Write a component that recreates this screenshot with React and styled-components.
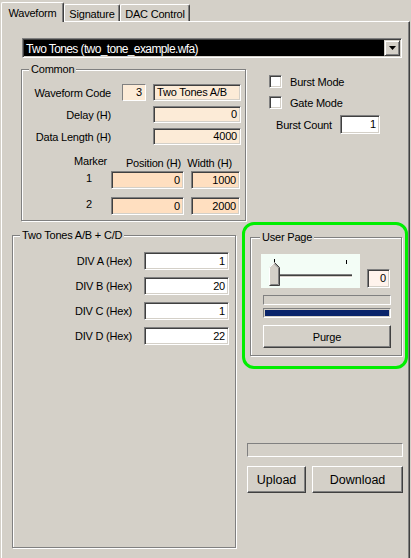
import React from "react";
import styled, { createGlobalStyle } from "styled-components";

const GlobalStyle = createGlobalStyle`
  html, body {
    margin: 0;
    background: #d4d0c8;
  }
  * {
    box-sizing: border-box;
  }
`;

const Window = styled.div`
  width: 411px;
  height: 558px;
  overflow: hidden;
  background: #d4d0c8;
  padding-top: 2px;
  font-family: "Liberation Sans", Arial, sans-serif;
  font-size: 11px;
  letter-spacing: -0.2px;
  color: #000;
`;

const TabRow = styled.div`
  display: flex;
  align-items: flex-end;
  height: 19px;
  padding-left: 1px;
  position: relative;
  z-index: 1;
`;

const Tab = styled.div`
  width: ${(p) => p.$width}px;
  height: ${(p) => (p.$active ? 20 : 17)}px;
  margin-bottom: ${(p) => (p.$active ? -1 : 0)}px;
  padding-top: ${(p) => (p.$active ? 3 : 2)}px;
  line-height: 14px;
  text-align: center;
  background: #d4d0c8;
  border-top: 1px solid #fff;
  border-left: 1px solid #fff;
  border-right: 1px solid #404040;
  border-top-left-radius: 2px;
  border-top-right-radius: 2px;
  box-shadow: inset -1px 0 0 #808080;
`;

const Panel = styled.div`
  margin-left: 1px;
  width: 409px;
  height: 545px;
  border-top: 1px solid #fff;
  border-left: 1px solid #fff;
  border-right: 1px solid #404040;
  box-shadow: inset -1px 0 0 #808080;
`;

const Dropdown = styled.div`
  display: flex;
  align-items: center;
  margin: 16px 0 0 20px;
  width: 380px;
  height: 20px;
  padding-left: 3px;
  background: #000;
  color: #fff;
  font-size: 12px;
  letter-spacing: -0.6px;
  border: 1px solid;
  border-color: #808080 #fff #fff #808080;
  box-shadow: inset 1px 1px 0 #404040, inset -1px -1px 0 #d4d0c8;
`;

const DropText = styled.span`
  flex: 1;
  padding-top: 1px;
`;

const DropButton = styled.div`
  display: flex;
  align-items: center;
  justify-content: center;
  width: 16px;
  height: 16px;
  margin-right: 1px;
  background: #d4d0c8;
  border: 1px solid;
  border-color: #d4d0c8 #404040 #404040 #d4d0c8;
  box-shadow: inset 1px 1px 0 #fff, inset -1px -1px 0 #808080;
`;

const Row = styled.div`
  display: flex;
  align-items: flex-start;
  margin-top: ${(p) => p.$top || 0}px;
`;

const GroupBox = styled.fieldset`
  margin: ${(p) => p.$margin || "0"};
  padding: ${(p) => p.$padding || "0"};
  min-width: 0;
  width: ${(p) => p.$width}px;
  height: ${(p) => (p.$height ? `${p.$height}px` : "auto")};
  border: 1px solid #808080;
  box-shadow: inset 1px 1px 0 #fff, 1px 1px 0 #fff;
`;

const Legend = styled.legend`
  margin-left: ${(p) => p.$indent || 7}px;
  padding: 0 2px;
  line-height: 13px;
  background: #d4d0c8;
`;

const FormGrid = styled.div`
  display: grid;
  grid-template-columns: ${(p) => p.$columns};
  grid-auto-rows: ${(p) => p.$rowHeight}px;
  column-gap: ${(p) => p.$colGap}px;
  row-gap: ${(p) => p.$rowGap}px;
`;

const Label = styled.div`
  align-self: center;
  text-align: right;
  padding-right: ${(p) => p.$pad || 0}px;
  white-space: nowrap;
`;

const Field = styled.div`
  grid-column: ${(p) => p.$col || "auto"};
  height: ${(p) => p.$height || 17}px;
  padding: 0 3px;
  line-height: ${(p) => (p.$height || 17) - 2}px;
  text-align: ${(p) => (p.$left ? "left" : "right")};
  white-space: nowrap;
  overflow: hidden;
  background: ${(p) => p.$bg || "#fff"};
  border: 1px solid;
  border-color: #808080 #fff #fff #808080;
  box-shadow: inset 1px 1px 0 #404040, inset -1px -1px 0 #d4d0c8;
`;

const StaticField = styled.div`
  padding: 0 3px;
  line-height: 15px;
  text-align: right;
  background: #fcebd7;
  border: 1px solid;
  border-color: #808080 #fff #fff #808080;
`;

const MarkerGrid = styled.div`
  display: grid;
  grid-template-columns: 82px 73px 49px;
  grid-template-rows: 14px 24px 18px;
  column-gap: 7px;
  row-gap: 2px;
  margin-top: 10px;
`;

const MarkerLabel = styled.div`
  align-self: start;
  padding-left: 52px;
  padding-top: ${(p) => p.$top || 0}px;
  text-align: center;
  white-space: nowrap;
`;

const MarkerHead = styled.div`
  align-self: end;
  justify-self: end;
  margin-right: ${(p) => p.$right}px;
  white-space: nowrap;
`;

const MarkerField = styled(Field)`
  align-self: start;
`;

const Options = styled.div`
  display: flex;
  flex-direction: column;
  margin: 12px 0 0 23px;
`;

const CheckRow = styled.label`
  display: flex;
  align-items: center;
  gap: 8px;
  height: 13px;
  margin-bottom: 8px;
`;

const CheckBox = styled.span`
  width: 13px;
  height: 13px;
  background: #fff;
  border: 1px solid;
  border-color: #808080 #fff #fff #808080;
  box-shadow: inset 1px 1px 0 #404040, inset -1px -1px 0 #d4d0c8;
`;

const CountRow = styled.div`
  display: flex;
  align-items: center;
  margin: -2px 0 0 7px;
`;

const CountLabel = styled.span`
  width: 64px;
  white-space: nowrap;
`;

const RightColumn = styled.div`
  display: flex;
  flex-direction: column;
  margin-left: 6px;
`;

const Highlight = styled.div`
  width: 166px;
  height: 147px;
  padding: 6px 0 0 5px;
  border: 3px solid #00ee00;
  border-radius: 12px;
`;

const SliderRow = styled.div`
  display: flex;
  align-items: flex-end;
  gap: 7px;
  margin-left: 10px;
`;

const SliderArea = styled.div`
  width: 99px;
  height: 34px;
  background: #f3fdf6;
`;

const Bar = styled.div`
  width: ${(p) => p.$width}px;
  height: ${(p) => p.$height}px;
  margin: ${(p) => p.$margin};
  padding: 1px;
  background: #d4d0c8;
  border: 1px solid;
  border-color: #808080 #fff #fff #808080;
`;

const BarFill = styled.div`
  height: 100%;
  background: #0a246a;
`;

const Button = styled.div`
  display: flex;
  align-items: center;
  justify-content: center;
  width: ${(p) => p.$width}px;
  height: ${(p) => p.$height}px;
  font-size: ${(p) => p.$size || 11}px;
  letter-spacing: ${(p) => (p.$size ? 0 : -0.2)}px;
  background: #d4d0c8;
  border: 1px solid;
  border-color: #fff #404040 #404040 #fff;
  box-shadow: inset -1px -1px 0 #808080;
`;

const ButtonRow = styled.div`
  display: flex;
  gap: 6px;
  margin: 9px 0 0 5px;
`;

function Slider() {
  return (
    <SliderArea>
      <svg width="99" height="34" viewBox="0 0 99 34">
        <line x1="13.5" y1="5" x2="13.5" y2="10" stroke="#000" />
        <line x1="85.5" y1="6" x2="85.5" y2="10" stroke="#000" />
        <rect x="8" y="20" width="83" height="1" fill="#808080" />
        <rect x="8" y="21" width="83" height="1" fill="#404040" />
        <rect x="8" y="22" width="83" height="1" fill="#d4d0c8" />
        <rect x="8" y="23" width="83" height="1" fill="#fff" />
        <polygon points="8,13.5 13.5,8 19,13.5 19,32 8,32" fill="#d4d0c8" />
        <polyline points="8.5,31.5 8.5,13.5 13.5,8.5" fill="none" stroke="#fff" />
        <polyline points="13.5,8.5 18.5,13.5 18.5,31.5 8.5,31.5" fill="none" stroke="#404040" />
        <polyline points="13.5,9.9 17.5,13.9 17.5,30.5 9.5,30.5" fill="none" stroke="#808080" />
      </svg>
    </SliderArea>
  );
}

const peach = "#fcebd7";
const orange = "#ffdfc0";

export default function App() {
  return (
    <Window>
      <GlobalStyle />
      <TabRow>
        <Tab $active $width={63}>Waveform</Tab>
        <Tab $width={56}>Signature</Tab>
        <Tab $width={70}>DAC Control</Tab>
      </TabRow>
      <Panel>
        <Dropdown>
          <DropText>Two Tones (two_tone_example.wfa)</DropText>
          <DropButton>
            <svg width="7" height="4" viewBox="0 0 7 4">
              <polygon points="0,0 7,0 3.5,4" fill="#000" />
            </svg>
          </DropButton>
        </Dropdown>

        <Row $top={5}>
          <GroupBox $margin="0 0 0 19px" $padding="8px 0 5px 0" $width={225}>
            <Legend>Common</Legend>
            <FormGrid $columns="93px 24px 88px" $rowHeight={17} $colGap={7} $rowGap={5}>
              <Label $pad={4}>Waveform Code</Label>
              <StaticField>3</StaticField>
              <Field $bg={peach} $left>Two Tones A/B</Field>
              <Label $pad={4}>Delay (H)</Label>
              <Field $bg={peach} $col="3">0</Field>
              <Label $pad={4}>Data Length (H)</Label>
              <Field $bg={peach} $col="3">4000</Field>
            </FormGrid>
            <MarkerGrid>
              <MarkerLabel>Marker</MarkerLabel>
              <MarkerHead $right={3}>Position (H)</MarkerHead>
              <MarkerHead $right={8}>Width (H)</MarkerHead>
              <MarkerLabel $top={1}>1</MarkerLabel>
              <MarkerField $bg={orange} $height={18}>0</MarkerField>
              <MarkerField $bg={orange} $height={18}>1000</MarkerField>
              <MarkerLabel $top={1}>2</MarkerLabel>
              <MarkerField $bg={orange} $height={18}>0</MarkerField>
              <MarkerField $bg={orange} $height={18}>2000</MarkerField>
            </MarkerGrid>
          </GroupBox>

          <Options>
            <CheckRow>
              <CheckBox />
              Burst Mode
            </CheckRow>
            <CheckRow>
              <CheckBox />
              Gate Mode
            </CheckRow>
            <CountRow>
              <CountLabel>Burst Count</CountLabel>
              <Field $height={19} style={{ width: 40 }}>1</Field>
            </CountRow>
          </Options>
        </Row>

        <Row $top={1}>
          <GroupBox $margin="7px 0 0 10px" $padding="10px 0 0 0" $width={224} $height={319}>
            <Legend>Two Tones A/B + C/D</Legend>
            <FormGrid $columns="119px 85px" $rowHeight={18} $colGap={12} $rowGap={7}>
              <Label>DIV A (Hex)</Label>
              <Field $height={18}>1</Field>
              <Label>DIV B (Hex)</Label>
              <Field $height={18}>20</Field>
              <Label>DIV C (Hex)</Label>
              <Field $height={18}>1</Field>
              <Label>DIV D (Hex)</Label>
              <Field $height={18}>22</Field>
            </FormGrid>
          </GroupBox>

          <RightColumn>
            <Highlight>
              <GroupBox $padding="10px 0 0 0" $width={152} $height={125}>
                <Legend $indent={9}>User Page</Legend>
                <SliderRow>
                  <Slider />
                  <Field $bg="#fff3ec" $height={19} style={{ width: 23 }}>0</Field>
                </SliderRow>
                <Bar $width={128} $height={10} $margin="7px 0 0 12px" />
                <Bar $width={128} $height={10} $margin="3px 0 0 12px">
                  <BarFill />
                </Bar>
                <Button $width={128} $height={23} style={{ margin: "7px 0 0 12px" }}>
                  Purge
                </Button>
              </GroupBox>
            </Highlight>
            <Bar $width={156} $height={14} $margin="74px 0 0 5px" />
            <ButtonRow>
              <Button $width={59} $height={27} $size={12.5}>Upload</Button>
              <Button $width={91} $height={27} $size={12.5}>Download</Button>
            </ButtonRow>
          </RightColumn>
        </Row>
      </Panel>
    </Window>
  );
}
